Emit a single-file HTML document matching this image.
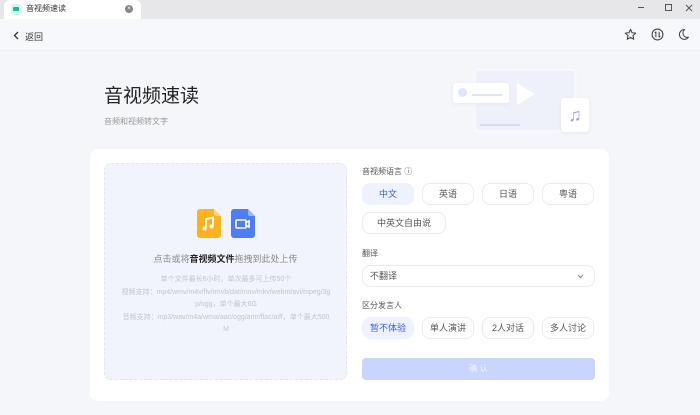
<!DOCTYPE html><html><head><meta charset="utf-8"><style>
*{margin:0;padding:0;box-sizing:border-box}
body{width:700px;height:415px;overflow:hidden;background:#f5f6fa;font-family:"Liberation Sans","Noto Sans CJK SC",sans-serif;position:relative;color:#333}
.a{position:absolute}
.btn{position:absolute;height:22px;border:1px solid #e9ebf0;border-radius:8px;background:#fff;font-size:9px;color:#555;text-align:center;line-height:20px}
.sel{background:#eef2ff;border-color:#eef2ff;color:#3a5cf5}
</style></head><body>
<div class="a" style="left:0;top:0;width:700px;height:19px;background:#e7e7e9"></div>
<div class="a" style="left:4px;top:0;width:137px;height:19px;background:#fff;border-radius:6px 6px 0 0"></div>
<div class="a" style="left:11px;top:4px;width:11px;height:11px;background:#d7f3ee;border-radius:3px"><div class="a" style="left:2px;top:3px;width:6px;height:4px;background:#1bb99a;border-radius:1px"></div></div>
<div class="a" style="left:26px;top:3px;font-size:8px;color:#333">音视频速读</div>
<div class="a" style="left:125px;top:5px;width:8px;height:8px;border-radius:50%;background:#888;color:#fff;font-size:6px;line-height:8px;text-align:center">×</div>
<div class="a" style="left:638px;top:7px;width:6px;border-top:1px solid #555"></div>
<div class="a" style="left:665px;top:4px;width:7px;height:7px;border:1px solid #555"></div>
<svg class="a" style="left:685px;top:4px" width="8" height="8"><path d="M1 1L7 7M7 1L1 7" stroke="#555" stroke-width="1"/></svg>
<div class="a" style="left:0;top:19px;width:700px;height:32px;background:#f7f8fb;border-bottom:1px solid #eceef2"></div>
<svg class="a" style="left:13px;top:31px" width="7" height="9"><path d="M5 1L1.5 4.5L5 8" stroke="#333" stroke-width="1.3" fill="none"/></svg>
<div class="a" style="left:25px;top:30px;font-size:9px;color:#333">返回</div>
<svg class="a" style="left:624px;top:28px" width="13" height="13" viewBox="0 0 24 24"><path d="M12 2.5l2.9 6.3 6.8.7-5.1 4.6 1.5 6.8L12 17.4l-6.1 3.5 1.5-6.8-5.1-4.6 6.8-.7z" fill="none" stroke="#444" stroke-width="2" stroke-linejoin="round"/></svg>
<svg class="a" style="left:651px;top:28px" width="13" height="13" viewBox="0 0 24 24"><circle cx="12" cy="12" r="10" fill="none" stroke="#444" stroke-width="2"/><path d="M9 7v10M9 7l-2 2M15 17V7M15 17l2-2" stroke="#444" stroke-width="2" fill="none"/></svg>
<svg class="a" style="left:677px;top:28px" width="13" height="13" viewBox="0 0 24 24"><path d="M14 3a9 9 0 1 0 7 14A8 8 0 0 1 14 3z" fill="none" stroke="#444" stroke-width="2" stroke-linejoin="round"/></svg>
<div class="a" style="left:104px;top:81px;font-size:19px;color:#222">音视频速读</div>
<div class="a" style="left:104px;top:116px;font-size:8px;color:#999">音频和视频转文字</div>
<div class="a" style="left:473px;top:68px;width:104px;height:65px;background:#eef0fa;border:3px solid #f7f8ff;border-radius:6px"></div>
<div class="a" style="left:517px;top:83px;width:0;height:0;border-left:18px solid #fff;border-top:11px solid transparent;border-bottom:11px solid transparent"></div>
<div class="a" style="left:453px;top:83px;width:56px;height:20px;background:#fff;border-radius:3px;box-shadow:0 1px 4px #e4e6f2"></div>
<div class="a" style="left:458px;top:88px;width:9px;height:9px;border-radius:50%;background:#dfe4ff"></div>
<div class="a" style="left:472px;top:94px;width:30px;height:2px;background:#e3e5f0"></div>
<div class="a" style="left:480px;top:124px;width:40px;height:2px;background:#d8dcf5"></div>
<div class="a" style="left:561px;top:98px;width:28px;height:34px;background:#fff;border-radius:4px;box-shadow:0 1px 4px #e4e6f2;color:#a39cf0;font-size:18px;text-align:center;line-height:34px">♫</div>
<div class="a" style="left:90px;top:149px;width:519px;height:252px;background:#fff;border-radius:8px"></div>
<div class="a" style="left:104px;top:163px;width:243px;height:217px;background:#f2f4fd;border:1px dashed #e3e6f3;border-radius:7px"></div>
<svg class="a" style="left:197px;top:209px" width="24" height="29" viewBox="0 0 24 29"><path d="M3 0H17L24 7V26a3 3 0 0 1-3 3H3a3 3 0 0 1-3-3V3a3 3 0 0 1 3-3z" fill="#ffb21e"/><path d="M17 0L24 7H19a2 2 0 0 1-2-2z" fill="#ffd580"/><path d="M9 19V10l7-1.5V17" stroke="#fff" stroke-width="1.8" fill="none"/><circle cx="7.5" cy="19.5" r="2" fill="#fff"/><circle cx="14.5" cy="17.5" r="2" fill="#fff"/></svg>
<svg class="a" style="left:231px;top:209px" width="24" height="29" viewBox="0 0 24 29"><path d="M3 0H17L24 7V26a3 3 0 0 1-3 3H3a3 3 0 0 1-3-3V3a3 3 0 0 1 3-3z" fill="#4f7cf7"/><path d="M17 0L24 7H19a2 2 0 0 1-2-2z" fill="#9db6ff"/><rect x="5" y="11" width="10" height="8" rx="1" fill="none" stroke="#fff" stroke-width="1.6"/><path d="M15 13.5l3-1.5v6l-3-1.5" fill="none" stroke="#fff" stroke-width="1.6"/></svg>
<div class="a" style="left:104px;top:252px;width:243px;text-align:center;font-size:9px;color:#888">点击或将<b style="color:#222">音视频文件</b>拖拽到此处上传</div>
<div class="a" style="left:121px;top:274px;width:210px;text-align:center;font-size:7px;color:#c0c4cc;line-height:12.6px;word-break:break-all">单个文件最长6小时，单次最多可上传50个<br>视频支持：mp4/wmv/m4v/flv/rmvb/dat/mov/mkv/webm/avi/mpeg/3gp/ogg，单个最大6G<br>音频支持：mp3/wav/m4a/wma/aac/ogg/amr/flac/aiff，单个最大500M</div>
<div class="a" style="left:362px;top:166px;font-size:8px;color:#555">音视频语言 ⓘ</div>
<div class="btn sel" style="left:362px;top:183px;width:52px">中文</div>
<div class="btn" style="left:422px;top:183px;width:52px">英语</div>
<div class="btn" style="left:482px;top:183px;width:52px">日语</div>
<div class="btn" style="left:542px;top:183px;width:52px">粤语</div>
<div class="btn" style="left:362px;top:212px;width:84px">中英文自由说</div>
<div class="a" style="left:362px;top:248px;font-size:8px;color:#555">翻译</div>
<div class="btn" style="left:362px;top:265px;width:233px;text-align:left;padding-left:7px">不翻译<svg class="a" style="right:10px;top:8px" width="7" height="5"><path d="M1 1l2.5 2.5L6 1" stroke="#888" fill="none"/></svg></div>
<div class="a" style="left:362px;top:300px;font-size:8px;color:#555">区分发言人</div>
<div class="btn sel" style="left:362px;top:317px;width:52px">暂不体验</div>
<div class="btn" style="left:422px;top:317px;width:52px">单人演讲</div>
<div class="btn" style="left:482px;top:317px;width:52px">2人对话</div>
<div class="btn" style="left:542px;top:317px;width:52px">多人讨论</div>
<div class="a" style="left:362px;top:358px;width:233px;height:22px;background:#c9d5fd;border-radius:4px;color:#eef1ff;font-size:8px;text-align:center;line-height:22px">确 认</div>
</body></html>
